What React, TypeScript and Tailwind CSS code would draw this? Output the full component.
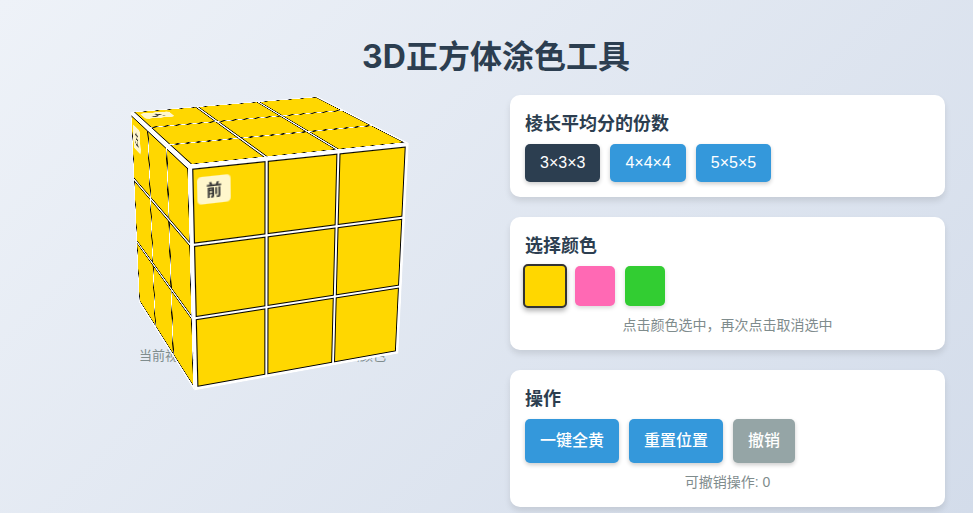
const grid = [0, 1, 2, 3, 4, 5, 6, 7, 8];

const faces = [
  { label: "前", className: "[transform:translateZ(104px)]" },
  { label: "左", className: "[transform:rotateY(-90deg)_translateZ(104px)]" },
  { label: "上", className: "[transform:rotateX(90deg)_translateZ(104px)]" },
];

function Cube() {
  return (
    <div className="relative w-[208px] h-[208px] [transform-style:preserve-3d] [transform:translate(-1.5px,2px)_scaleY(1.02)_rotateX(-19.5deg)_rotateY(20.5deg)]">
      {faces.map((face) => (
        <div
          key={face.label}
          className={`absolute inset-0 grid grid-cols-3 grid-rows-3 gap-[2px] p-[3px] bg-white ${face.className}`}
        >
          {grid.map((i) => (
            <div key={i} className="bg-[#ffd700] border border-black" />
          ))}
          <div className="absolute left-[7px] top-[11px] px-2 py-[2px] rounded bg-white/80 text-sm font-bold text-[#333]">
            {face.label}
          </div>
        </div>
      ))}
    </div>
  );
}

function Card({ title, children }: { title: string; children: React.ReactNode }) {
  return (
    <div className="bg-white rounded-[10px] p-[15px] shadow-[0_4px_6px_rgba(0,0,0,0.1)]">
      <h3 className="text-[18px] leading-[25px] font-bold text-[#2c3e50] mb-[7px] mt-[2px]">{title}</h3>
      {children}
    </div>
  );
}

function Btn({ children, className }: { children: React.ReactNode; className: string }) {
  return (
    <button className={`px-[15px] rounded-[5px] text-white shadow-[0_2px_4px_rgba(0,0,0,0.2)] ${className}`}>
      {children}
    </button>
  );
}

export default function App() {
  return (
    <div className="h-[513px] overflow-hidden bg-[linear-gradient(135deg,#eef2f8_0%,#d3dcea_100%)] [font-family:'Liberation_Sans','Noto_Sans_CJK_SC',sans-serif] text-[#2c3e50]">
      <h1 className="pt-[35px] pb-[16px] pl-[19px] text-center text-[32px] leading-[44px] font-bold [font-family:Inter,'Noto_Sans_CJK_SC',sans-serif]">3D正方体涂色工具</h1>
      <div className="flex px-[28px] gap-[13px]">
        <div className="w-[469px] flex flex-col items-center">
          <div className="w-[300px] h-[260px] mt-[3px] mb-[-11px] flex items-center justify-center [perspective:1000px]">
            <Cube />
          </div>
          <p className="text-[13px] leading-[18px] text-[#7f8c8d]">当前视角：拖动旋转查看正方体各个面颜色</p>
        </div>
        <div className="w-[435px] flex flex-col gap-[20px]">
          <Card title="棱长平均分的份数">
            <div className="flex gap-[10px] h-[38px] text-[16px]">
              <Btn className="bg-[#2c3e50]">3×3×3</Btn>
              <Btn className="bg-[#3498db]">4×4×4</Btn>
              <Btn className="bg-[#3498db]">5×5×5</Btn>
            </div>
          </Card>
          <Card title="选择颜色">
            <div className="flex gap-[10px]">
              <div className="w-[40px] h-[40px] rounded-[5px] bg-[#ffd700] border-[2px] border-[#333] box-content m-[-2px] shadow-[0_3px_5px_rgba(0,0,0,0.3)]" />
              <div className="w-[40px] h-[40px] rounded-[5px] bg-[#ff69b4] shadow-[0_2px_4px_rgba(0,0,0,0.15)]" />
              <div className="w-[40px] h-[40px] rounded-[5px] bg-[#32cd32] shadow-[0_2px_4px_rgba(0,0,0,0.15)]" />
            </div>
            <p className="mt-[10px] text-center text-[14px] leading-[19px] text-[#7f8c8d]">点击颜色选中，再次点击取消选中</p>
          </Card>
          <Card title="操作">
            <div className="flex gap-[10px] h-[44px] text-[16px] font-medium">
              <Btn className="bg-[#3498db]">一键全黄</Btn>
              <Btn className="bg-[#3498db]">重置位置</Btn>
              <Btn className="bg-[#95a5a6]">撤销</Btn>
            </div>
            <p className="mt-[10px] text-center text-[14px] leading-[19px] text-[#7f8c8d]">可撤销操作: 0</p>
          </Card>
        </div>
      </div>
    </div>
  );
}
